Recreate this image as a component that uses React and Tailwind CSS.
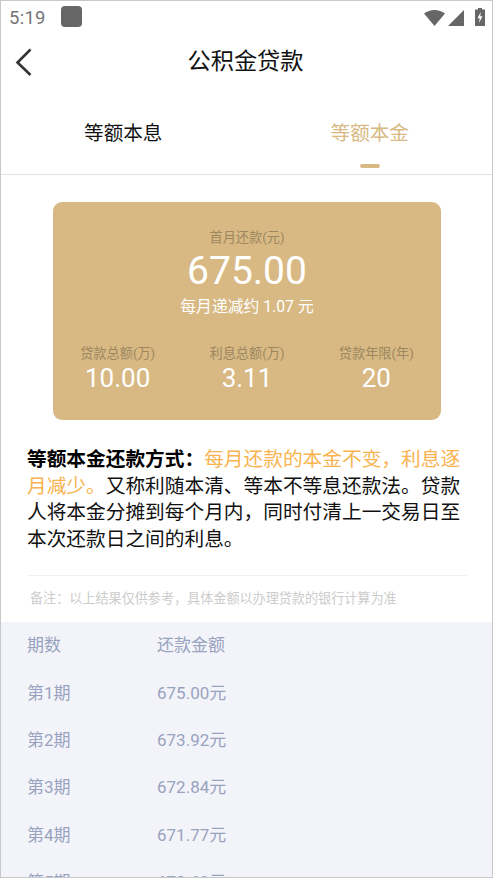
import React from 'react';

const font = 'font-["Roboto","Noto_Sans_CJK_SC",sans-serif]';

const rows = [
  ['第1期', '675.00元'],
  ['第2期', '673.92元'],
  ['第3期', '672.84元'],
  ['第4期', '671.77元'],
  ['第5期', '670.69元'],
];

const stats = [
  ['贷款总额(万)', '10.00'],
  ['利息总额(万)', '3.11'],
  ['贷款年限(年)', '20'],
];

const StatusBar = () => (
  <div className="flex h-[32px] items-center justify-between pl-[8px] pr-[7px]">
    <div className="flex items-center gap-[15px]">
      <span className="mt-[3px] text-[18.4px] leading-none tracking-[0.3px] text-[#757575]">5:19</span>
      <div className="mt-[-1px] h-[21px] w-[21px] rounded-[4px] bg-[#666666]" />
    </div>
    <div className="flex items-center">
      <svg width="21" height="16" viewBox="0 0 21 16" className="mr-[3px] mt-[1px]">
        <path d="M0 3.6C3 1.3 6.6 0 10.5 0S18 1.3 21 3.6L10.5 16z" fill="#666666" />
      </svg>
      <svg width="16" height="16" viewBox="0 0 16 16" className="mr-[11px] mt-[1px]">
        <path d="M0 16L16 0v16z" fill="#666666" />
      </svg>
      <svg width="10" height="18" viewBox="0 0 10 18" className="mt-[-1px]">
        <path d="M3 0h4v1.5h3V18H0V1.5h3z" fill="#666666" />
        <path d="M5.8 4L2.5 10.3h2.2L4 15l3.5-6.7H5.2z" fill="#ffffff" />
      </svg>
    </div>
  </div>
);

export default function App() {
  return (
    <div className={`${font} relative h-[878px] w-[493px] overflow-hidden border border-[#c8c8c8] bg-white`}>
      <StatusBar />

      <div className="relative flex h-[56px] items-center justify-center">
        <svg width="18" height="28" viewBox="0 0 18 28" className="absolute left-[14px] top-[15px]" fill="none">
          <path d="M15.5 1.5L2.5 14.5L15.5 27" stroke="#333333" strokeWidth="2.6" />
        </svg>
        <span className="ml-[-2px] mt-[2px] text-[23.2px] leading-none text-[#111111]">公积金贷款</span>
      </div>

      <div className="mt-[2px] grid h-[84px] grid-cols-2 border-b border-[#e2e2e2]">
        <div className="flex justify-center pt-[31px]">
          <span className="ml-[-1px] text-[19.6px] leading-[24px] text-[#111111]">等额本息</span>
        </div>
        <div className="relative flex justify-center pt-[31px]">
          <span className="ml-[1px] text-[19.6px] leading-[24px] text-[#d8b983]">等额本金</span>
          <div className="absolute bottom-[6px] left-[113px] h-[4px] w-[20px] rounded-full bg-[#d8b983]" />
        </div>
      </div>

      <div className="ml-[52px] mr-[51px] mt-[27px] h-[218px] rounded-[9px] bg-[#d8b983] pt-[28px] text-center">
        <div className="text-[13.2px] leading-[16px] text-[#9c8760]">首月还款(元)</div>
        <div className="mt-[2px] text-[39px] leading-[46px] text-white">675.00</div>
        <div className="mt-[3px] text-[15.8px] leading-[20px] text-white">每月递减约 1.07 元</div>
        <div className="mt-[29px] grid grid-cols-3">
          {stats.map(([label, value]) => (
            <div key={label}>
              <div className="text-[13.2px] leading-[16px] text-[#9c8760]">{label}</div>
              <div className="mt-[1px] text-[26px] leading-[30px] text-white">{value}</div>
            </div>
          ))}
        </div>
      </div>

      <p className="ml-[26px] mr-[25px] mt-[27px] text-[19.7px] leading-[26.6px] text-[#111111]">
        <span className="font-bold text-black">等额本金还款方式：</span>
        <span className="text-[#f9b34f]">每月还款的本金不变，利息逐月减少。</span>
        又称利随本清、等本不等息还款法。贷款人将本金分摊到每个月内，同时付清上一交易日至本次还款日之间的利息。
      </p>

      <div className="ml-[26px] mr-[25px] mt-[22px] border-t border-[#f0f0f0] pl-[3px] pt-[15px] text-[13.1px] leading-[16px] text-[#cccccc]">
        备注：以上结果仅供参考，具体金额以办理贷款的银行计算为准
      </div>

      <div className="mt-[15px] bg-[#f3f4f9] pl-[26px] text-[17px] text-[#99a3bf]">
        <div className="flex h-[47.4px] items-center">
          <span className="w-[130px]">期数</span>
          <span>还款金额</span>
        </div>
        {rows.map(([term, amount]) => (
          <div key={term} className="flex h-[47.4px] items-center">
            <span className="w-[130px]">{term}</span>
            <span>{amount}</span>
          </div>
        ))}
      </div>
    </div>
  );
}
